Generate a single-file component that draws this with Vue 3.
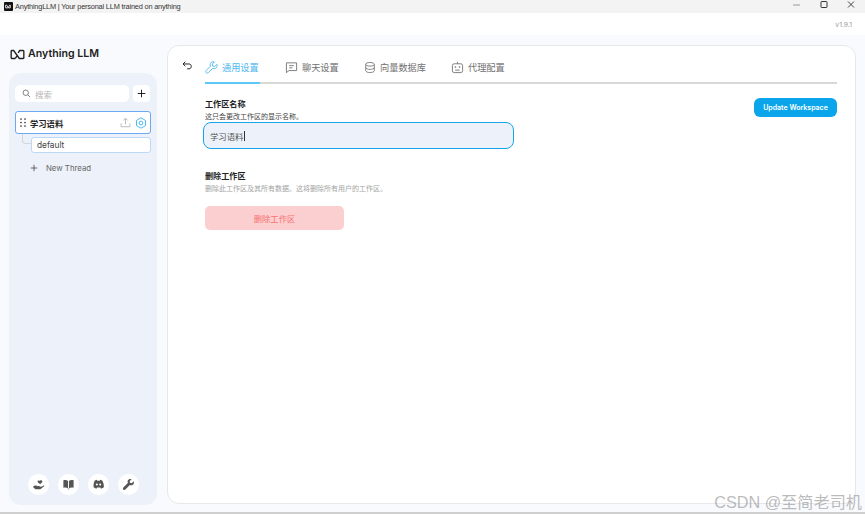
<script setup>
const tabs = [
  { key: 'general', label: '通用设置', width: 55, active: true },
  { key: 'chat', label: '聊天设置', width: 54, active: false },
  { key: 'vector', label: '向量数据库', width: 62, active: false },
  { key: 'agent', label: '代理配置', width: 55, active: false },
]
</script>

<template>
  <div class="window">
    <header class="titlebar">
      <div class="app-title">
        <span class="app-icon">
          <svg viewBox="0 0 12 12" width="9" height="9"><path d="M2.200 4.200h1.400L6 7.800h2.400V4.200H7.600L5.400 7.800H2.200z" fill="none" stroke="#fff" stroke-width="1.100"/></svg>
        </span>
        <span>AnythingLLM | Your personal LLM trained on anything</span>
      </div>
      <div class="win-controls">
        <svg viewBox="0 0 10 10" width="10" height="10"><path d="M1 5h7" stroke="#9a9a9a" stroke-width="1"/></svg>
        <svg viewBox="0 0 10 10" width="10" height="10"><rect x="2" y="1.500" width="6" height="6" rx=".6" fill="none" stroke="#333" stroke-width="1"/></svg>
        <svg viewBox="0 0 10 10" width="10" height="10"><path d="M2 1.500l6 6M8 1.500l-6 6" stroke="#333" stroke-width=".9"/></svg>
      </div>
    </header>

    <div class="versionbar">v1.9.1</div>

    <div class="body">
      <aside class="side">
        <div class="logo">
          <svg viewBox="0 0 16 12" width="15" height="11">
            <path d="M5.600 10.300H1.800a.7.700 0 0 1-.7-.7V2.400a.7.700 0 0 1 .7-.7h2L10 10.300h4.200a.7.700 0 0 0 .7-.7V2.400a.7.700 0 0 0-.7-.7h-3.800L8.700 4.300M5.600 10.300l1.700-2.600" fill="none" stroke="#222" stroke-width="1.500"/>
          </svg>
          <span>Anything LLM</span>
        </div>

        <div class="panel">
          <div class="search-row">
            <div class="search">
              <svg viewBox="0 0 12 12" width="9" height="9"><circle cx="5" cy="5" r="3.600" fill="none" stroke="#666" stroke-width="1.100"/><path d="m7.800 7.800 3 3" stroke="#666" stroke-width="1.100"/></svg>
              <span>搜索</span>
            </div>
            <button class="add">
              <svg viewBox="0 0 10 10" width="9" height="9"><path d="M5 .8v8.400M.8 5h8.400" stroke="#222" stroke-width="1.100"/></svg>
            </button>
          </div>

          <div class="workspace">
            <svg class="grip" viewBox="0 0 6 9" width="6" height="9" fill="#333">
              <circle cx="1" cy="1" r=".85"/><circle cx="5" cy="1" r=".85"/>
              <circle cx="1" cy="4.500" r=".85"/><circle cx="5" cy="4.500" r=".85"/>
              <circle cx="1" cy="8" r=".85"/><circle cx="5" cy="8" r=".85"/>
            </svg>
            <span class="ws-name">学习语料</span>
            <svg class="ws-upload" viewBox="0 0 12 12" width="11" height="11"><path d="M6 8V1.500M3.600 3.700 6 1.300l2.400 2.400M1.200 7v3.600h9.600V7" fill="none" stroke="#b5b8bd" stroke-width="1"/></svg>
            <svg class="ws-gear" viewBox="0 0 12 12" width="12" height="12"><path d="M6 .8 10.500 3.400v5.200L6 11.200 1.500 8.600V3.400z" fill="none" stroke="#4fb8f0" stroke-width="1" stroke-linejoin="round"/><circle cx="6" cy="6" r="1.900" fill="none" stroke="#4fb8f0" stroke-width="1"/></svg>
          </div>

          <div class="thread-row">
            <span class="elbow"></span>
            <div class="thread">default</div>
          </div>

          <div class="new-thread">
            <span class="plus-circle">
              <svg viewBox="0 0 10 10" width="8" height="8"><path d="M5 1v8M1 5h8" stroke="#444" stroke-width="1"/></svg>
            </span>
            <span>New Thread</span>
          </div>

          <div class="foot-icons">
            <span class="round">
              <svg viewBox="0 0 14 14" width="13" height="13"><path d="M1 9.500c1.500-1.500 3-1.800 4.500-1h2.200c.8 0 .8 1.200 0 1.200H6l4.600-.6 2-1c.6-.2 1 .5.500.9L9 12H4L2.300 11z" fill="#555"/><path d="M8 3.200c.6-1.400 3.200-1 3.200.7 0 1.100-1.500 1.900-2.400 2.700C7.900 5.900 6 5.100 6 3.800c0-1 1.300-1.500 2-.6z" fill="#555"/></svg>
            </span>
            <span class="round">
              <svg viewBox="0 0 14 14" width="13" height="13"><path d="M1.500 2.500c2-.5 4-.3 5 .6v8c-1-.8-3-1-5-.6zM12.500 2.500c-2-.5-4-.3-5 .6v8c1-.8 3-1 5-.6zM5.500 11.600l1.500.8 1.500-.8z" fill="#555"/></svg>
            </span>
            <span class="round">
              <svg viewBox="0 0 14 14" width="13" height="13"><path d="M3 2.800 5.200 2l.5.9h2.600l.5-.9 2.200.8c1.200 2 1.900 4.400 1.800 7.200-1 .8-2 1.200-3 1.500l-.8-1.300H5.500l-.8 1.300c-1-.3-2-.7-3-1.500C1.600 7.200 1.800 4.800 3 2.800z" fill="#555"/><circle cx="5.200" cy="7" r="1.100" fill="#fff"/><circle cx="8.800" cy="7" r="1.100" fill="#fff"/></svg>
            </span>
            <span class="round">
              <svg viewBox="0 0 14 14" width="13" height="13"><path d="M12.600 3.400 10.400 5.600 8.600 5.200 8.200 3.400l2.200-2.200C8.600.6 6.800 1.200 6.200 2.800c-.3.900-.2 1.800.1 2.500L1.500 10.100c-.7.700-.7 1.500-.1 2.200s1.600.7 2.200.1l4.900-4.800c.7.300 1.600.4 2.500.1 1.600-.6 2.200-2.500 1.600-4.300z" fill="#555"/></svg>
            </span>
          </div>
        </div>
      </aside>

      <main class="content">
        <div class="tab-head">
          <svg class="back" viewBox="0 0 12 10" width="11" height="9"><path d="M3.600.8 1 3.300l2.600 2.500M1.200 3.300h6.600c3.200 0 3.200 5.400 0 5.400H5.600" fill="none" stroke="#222" stroke-width="1.100"/></svg>
          <nav class="tabs">
            <div v-for="tab in tabs" :key="tab.key" class="tab" :class="{ active: tab.active }" :style="{ width: tab.width + 'px' }">
              <svg v-if="tab.key === 'general'" viewBox="0 0 14 14" width="13" height="13"><path d="M12.800 3.600 10.500 5.900 8.300 5.500 7.900 3.300l2.300-2.300C8.400.5 6.500 1 5.800 2.700c-.4 1-.3 2 .1 2.800L1.300 10.100c-.7.700-.7 1.700-.1 2.400s1.700.8 2.400.1l4.700-4.700c.8.400 1.800.5 2.800.1 1.700-.7 2.300-2.800 1.700-4.400z" fill="none" stroke="#4fb8f0" stroke-width="1"/></svg>
              <svg v-else-if="tab.key === 'chat'" viewBox="0 0 14 14" width="13" height="13"><path d="M1.500 2h11v8.300H4.300L1.500 12.500z" fill="none" stroke="#777" stroke-width="1"/><path d="M4.500 5h5M4.500 7.400h3.500" stroke="#777" stroke-width="1"/></svg>
              <svg v-else-if="tab.key === 'vector'" viewBox="0 0 14 14" width="13" height="13"><ellipse cx="7" cy="3.300" rx="5" ry="2.200" fill="none" stroke="#777" stroke-width="1"/><path d="M2 3.300v7.400c0 1.200 2.200 2.200 5 2.200s5-1 5-2.200V3.300M2 7c0 1.200 2.200 2.200 5 2.200S12 8.200 12 7" fill="none" stroke="#777" stroke-width="1"/></svg>
              <svg v-else viewBox="0 0 14 14" width="13" height="13"><rect x="1.500" y="3" width="11" height="9.500" rx="2" fill="none" stroke="#777" stroke-width="1"/><path d="M7 3V.9M4.500 9.800h5" stroke="#777" stroke-width="1"/><circle cx="4.800" cy="6.500" r=".9" fill="#777"/><circle cx="9.200" cy="6.500" r=".9" fill="#777"/></svg>
              <span>{{ tab.label }}</span>
            </div>
          </nav>
        </div>

        <div class="form-wrap">
          <form class="form" @submit.prevent>
            <div class="name-block">
              <h3>工作区名称</h3>
              <p class="hint-dark">这只会更改工作区的显示名称。</p>
              <div class="name-input"><span>学习语料</span><i class="caret"></i></div>
            </div>
            <div class="delete-block">
              <h3>删除工作区</h3>
              <p class="hint-light">删除此工作区及其所有数据。这将删除所有用户的工作区。</p>
              <button class="delete">删除工作区</button>
            </div>
          </form>
          <button class="update">Update Workspace</button>
        </div>
      </main>
    </div>

    <div class="watermark">CSDN @至简老司机</div>
  </div>
</template>

<style>
html, body { margin: 0; background: #fff; overflow: hidden; }
</style>

<style scoped>
.window {
  position: relative;
  width: 865px;
  height: 514px;
  display: flex;
  flex-direction: column;
  overflow: hidden;
  background: #f8fafd;
  border-bottom: 2px solid #cfcfcf;
  box-sizing: border-box;
  font-family: Inter, "Liberation Sans", "Noto Sans CJK SC", sans-serif;
}
.titlebar {
  height: 13px;
  flex: none;
  background: #f3f3f3;
  display: flex;
  align-items: center;
  justify-content: space-between;
}
.app-title {
  display: flex;
  align-items: center;
  gap: 2px;
  padding-left: 4px;
  font: 7.400px "Liberation Sans", sans-serif;
  letter-spacing: -.2px;
  color: #333;
}
.app-icon {
  width: 9px;
  height: 9px;
  background: #111;
  border-radius: 1px;
  display: flex;
}
.win-controls {
  display: flex;
  gap: 17px;
  padding: 0 9px 3px 0;
}
.versionbar {
  height: 22px;
  flex: none;
  background: #fff;
  box-sizing: border-box;
  padding: 7px 13px 0 0;
  text-align: right;
  font-size: 6.800px;
  line-height: 9px;
  color: #999;
}
.body {
  flex: 1;
  min-height: 0;
  display: flex;
  padding: 10px 9px 8px;
  gap: 10px;
}
.side {
  width: 148px;
  flex: none;
  display: flex;
  flex-direction: column;
}
.logo {
  height: 28px;
  margin-bottom: -2px;
  flex: none;
  display: flex;
  align-items: flex-start;
  gap: 3px;
  padding: 2px 0 0 1px;
  font-size: 10.600px;
  font-weight: 600;
  line-height: 14px;
  color: #222;
}
.logo svg { margin-top: 2px; }
.panel {
  flex: 1;
  margin-bottom: -1px;
  background: #edf2fa;
  border-radius: 12px;
  padding: 12px 6px 10px;
  display: flex;
  flex-direction: column;
}
.search-row {
  display: flex;
  gap: 4px;
  padding-right: 1px;
}
.search {
  width: 114px;
  height: 17px;
  background: #fff;
  border-radius: 5px;
  box-sizing: border-box;
  padding-left: 7px;
  display: flex;
  align-items: center;
  gap: 4px;
  font-size: 8.500px;
  color: #b5b5b5;
}
.add {
  width: 17px;
  height: 17px;
  padding: 0;
  background: #fff;
  border: 0;
  border-radius: 4px;
  display: flex;
  align-items: center;
  justify-content: center;
}
.workspace {
  height: 23px;
  margin-top: 9px;
  box-sizing: border-box;
  background: #fff;
  border: 1.500px solid #6ba9f2;
  border-radius: 3px;
  display: flex;
  align-items: center;
  padding: 0 3px 0 4px;
}
.ws-name {
  margin-left: 4px;
  font-size: 8.300px;
  font-weight: 700;
  color: #222;
  flex: 1;
}
.ws-gear { margin-left: 4px; }
.thread-row {
  display: flex;
  margin-top: 3px;
  padding-left: 16px;
  position: relative;
}
.elbow {
  position: absolute;
  left: 7px;
  top: -3px;
  width: 9px;
  height: 10px;
  border-left: 1.500px solid #d2d5da;
  border-bottom: 1.500px solid #d2d5da;
  border-bottom-left-radius: 4px;
  box-sizing: border-box;
}
.thread {
  flex: 1;
  height: 16px;
  box-sizing: border-box;
  padding-left: 5px;
  background: #fff;
  border: 1px solid #bcd9f8;
  border-radius: 3px;
  font-size: 8.300px;
  line-height: 14px;
  color: #444;
}
.new-thread {
  margin-top: 7px;
  height: 16px;
  display: flex;
  align-items: center;
  padding-left: 15px;
  gap: 8px;
  font-size: 7.800px;
  color: #666;
}
.plus-circle { display: flex; }
.foot-icons {
  margin-top: auto;
  display: flex;
  justify-content: center;
  gap: 9px;
}
.round {
  width: 21px;
  height: 21px;
  border-radius: 50%;
  background: #fff;
  display: flex;
  align-items: center;
  justify-content: center;
}
.content {
  flex: 1;
  min-width: 0;
  background: #fff;
  border: 1px solid #e6e8ec;
  border-radius: 12px;
  box-sizing: border-box;
  padding: 0 18px 0 14px;
  display: flex;
  flex-direction: column;
}
.tab-head {
  display: flex;
  align-items: flex-start;
}
.back { margin-top: 15px; flex: none; }
.tabs {
  flex: 1;
  height: 38px;
  box-sizing: border-box;
  margin-left: 12px;
  display: flex;
  gap: 25px;
  border-bottom: 2px solid #d8d8d8;
}
.tab {
  height: 38px;
  box-sizing: border-box;
  padding-top: 15px;
  display: flex;
  align-items: flex-start;
  gap: 4px;
  flex: none;
  font-size: 9.200px;
  line-height: 13px;
  color: #707070;
  white-space: nowrap;
}
.tab.active {
  color: #4fb8f0;
  border-bottom: 2px solid #5cc8f5;
}
.form-wrap {
  display: flex;
  justify-content: space-between;
  align-items: flex-start;
  padding-left: 23px;
}
.form { width: 312px; margin-left: -2px; }
h3 {
  margin: 0;
  font-size: 8.100px;
  line-height: 12px;
  font-weight: 700;
  color: #222;
  padding-left: 2px;
}
.name-block { padding-top: 14px; }
.hint-dark, .hint-light {
  margin: 2px 0 0;
  padding-left: 2px;
  font-size: 7px;
  line-height: 10px;
}
.hint-dark { color: #444; }
.hint-light { color: #a3a3a3; }
.name-input {
  width: 311px;
  height: 27px;
  box-sizing: border-box;
  padding-left: 6px;
  background: #edf2fa;
  border: 1.500px solid #16a5ea;
  border-radius: 8px;
  display: flex;
  align-items: center;
  font-size: 8.400px;
  color: #555;
}
.caret {
  width: 1px;
  height: 10px;
  background: #333;
}
.delete-block { padding-top: 21px; }
.delete {
  display: block;
  width: 139px;
  height: 24px;
  margin: 12px 0 0 2px;
  padding: 0;
  background: #fbcfcf;
  border: 0;
  border-radius: 5px;
  font: inherit;
  font-size: 8.300px;
  color: #f87171;
}
.update {
  margin-top: 14px;
  width: 83px;
  height: 19px;
  padding: 0;
  background: #0ba5ec;
  border: 0;
  border-radius: 6px;
  font: inherit;
  font-size: 7px;
  font-weight: 600;
  color: #fff;
}
.watermark {
  position: absolute;
  right: 3px;
  bottom: 0;
  font-family: "Liberation Sans", "Noto Sans CJK SC", sans-serif;
  font-size: 16.200px;
  line-height: 20px;
  color: rgba(120, 120, 120, .5);
}
</style>
